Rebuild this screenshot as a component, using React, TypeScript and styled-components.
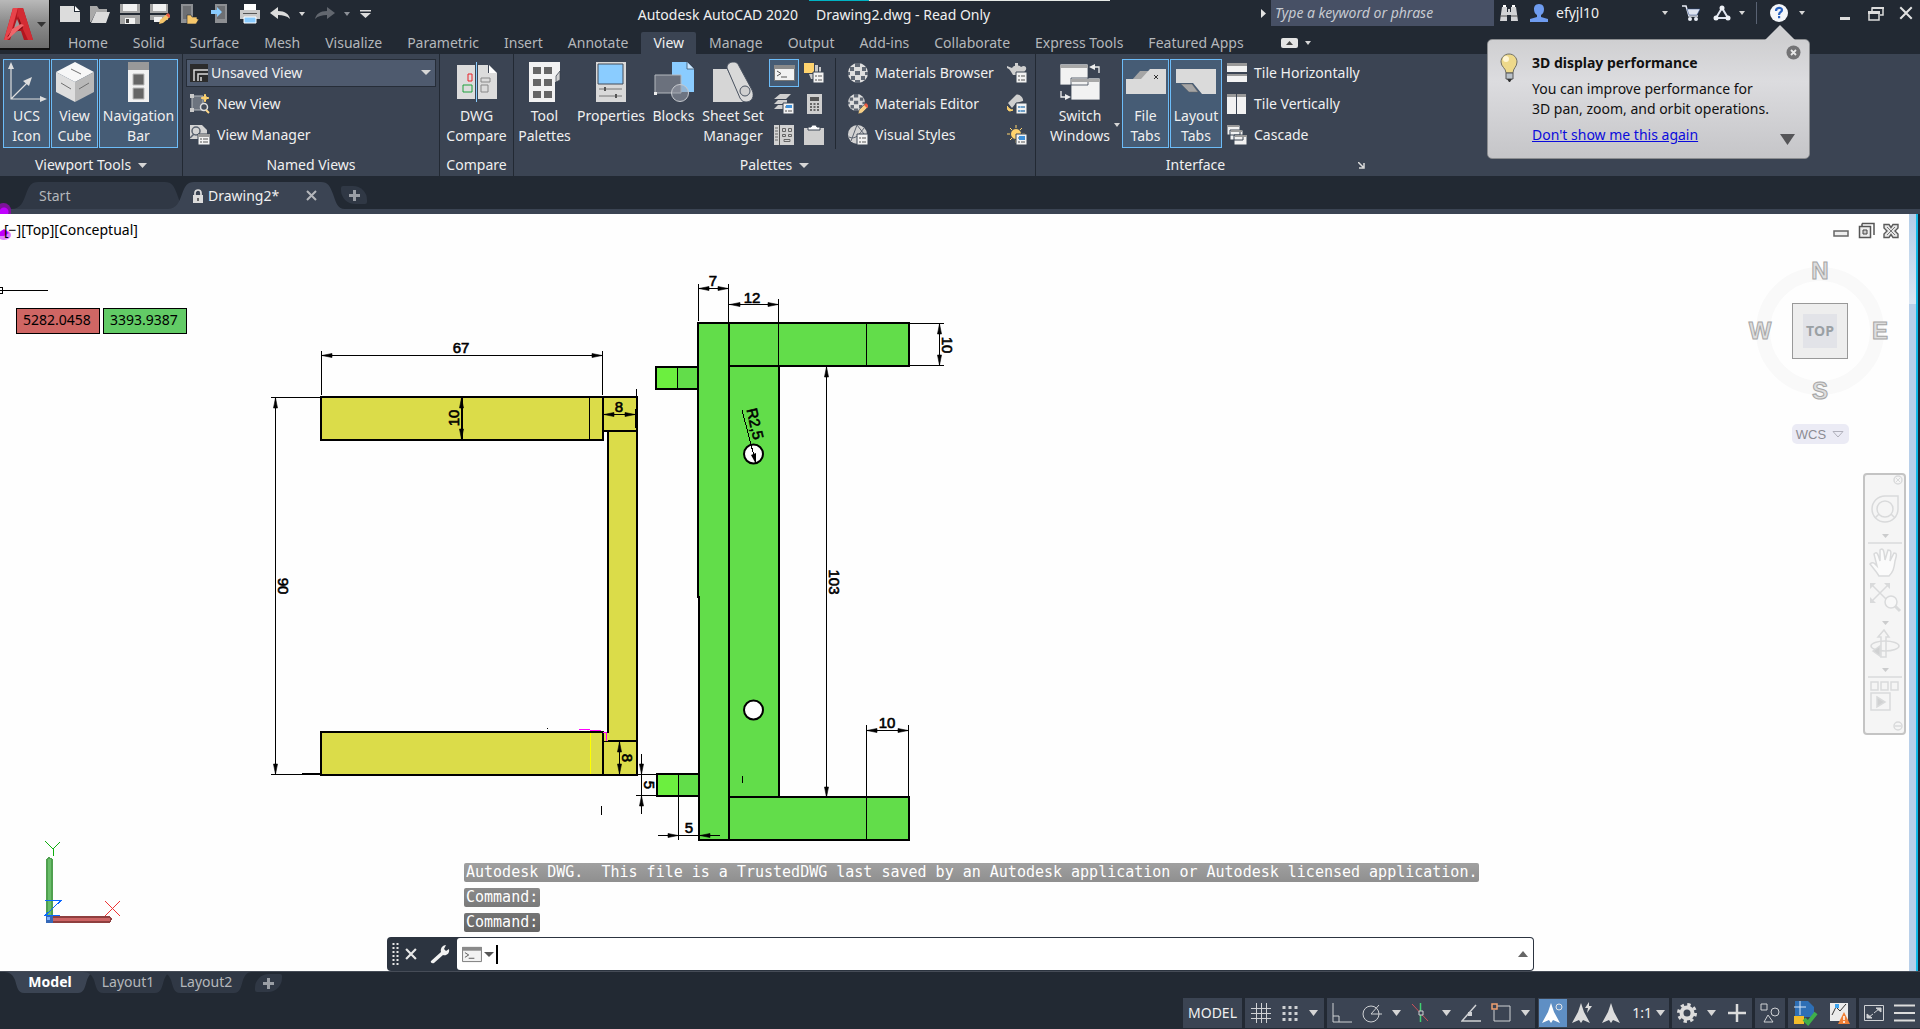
import React from 'react';
import styled, { createGlobalStyle, css } from 'styled-components';

const c = {
  frame: '#222933',
  panel: '#3b4453',
  tab: '#303845',
  text: '#f0f0f0',
  dim: '#b4b7bb',
  active: '#465c75',
  accent: '#6cbcf8',
  icon: '#dcdcdc',
  sky: '#8accff',
};

const Global = createGlobalStyle`
  *, *::before, *::after { box-sizing: border-box; }
  body { margin: 0; background: ${c.frame}; }
  button, input, select { font: inherit; color: inherit; }
  svg { display: block; flex: none; }
`;

const Window = styled.div`
  display: flex;
  flex-direction: column;
  height: 100vh;
  overflow: hidden;
  background: ${c.frame};
  color: ${c.text};
  font: 14px/20px 'Noto Sans', 'Open Sans', sans-serif;
`;

const Plain = styled.button`
  display: flex;
  align-items: center;
  justify-content: center;
  padding: 0;
  border: 0;
  background: none;
  white-space: nowrap;
`;

/* ---------- header ---------- */

const Header = styled.header`
  display: grid;
  grid-template-columns: 50px 1fr;
  height: 54px;
`;

const AppButton = styled(Plain)`
  height: 50px;
  gap: 3px;
  border-right: 1px solid #111;
  border-bottom: 2px solid #111;
  background: linear-gradient(#b9b9b9, #8d8d8d 45%, #6d6d6d);
`;

const TitleRow = styled.div`
  display: flex;
  height: 27px;
`;

const QuickBar = styled.div`
  display: flex;
  align-items: center;
  gap: 10px;
  width: 322px;
  padding-left: 10px;
`;

const Undo = styled(Plain)`
  gap: 9px;
`;

const Title = styled.h1`
  position: relative;
  display: flex;
  flex: 1;
  justify-content: center;
  gap: 18px;
  margin: 0;
  padding-top: 5px;
  font-size: 14px;
  font-weight: 400;
  white-space: nowrap;
  &::before {
    content: '';
    position: absolute;
    top: 0;
    left: 437px;
    width: 301px;
    height: 1px;
    background: linear-gradient(90deg, #00b3c4 60px, #e6e9e6 60px);
  }
`;

const InfoCenter = styled.div`
  display: flex;
  align-items: stretch;
  width: 664px;
  height: 26px;
`;

const Slot = styled(Plain)<{ $w: number; $gap?: number }>`
  width: ${p => p.$w}px;
  gap: ${p => p.$gap ?? 0}px;
`;

const Search = styled.input`
  width: 223px;
  padding: 0 4px;
  border: 0;
  border-radius: 0;
  background: #475065;
  font-style: italic;
  &::placeholder { color: #c6cad1; opacity: 1; }
`;

const User = styled(Plain)`
  width: 150px;
  gap: 8px;
  padding: 0 6px;
  span { flex: 1; text-align: left; }
`;

const Rule = styled.i`
  width: 1px;
  margin: 2px 6px;
  background: #596273;
`;

const WindowButtons = styled.div`
  display: flex;
  margin-left: auto;
`;

const RibbonTabs = styled.nav`
  display: flex;
  align-items: flex-end;
  gap: 1px;
  height: 27px;
  padding-left: 6px;
`;

const RibbonTab = styled(Plain)<{ $on?: boolean }>`
  height: 22px;
  padding: 0 12px;
  border-radius: 2px 2px 0 0;
  color: ${p => (p.$on ? c.text : c.dim)};
  background: ${p => (p.$on ? c.panel : 'none')};
`;

const Collapse = styled(Plain)`
  gap: 7px;
  height: 22px;
  margin-left: 24px;
`;

/* ---------- ribbon ---------- */

const Ribbon = styled.section`
  display: flex;
  height: 122px;
  background: ${c.panel};
`;

const Panel = styled.section<{ $w?: number; $last?: boolean }>`
  display: flex;
  flex-direction: column;
  flex: none;
  width: ${p => p.$w}px;
  border-right: ${p => (p.$last ? 0 : 1)}px solid ${c.frame};
`;

const PanelBody = styled.div`
  display: flex;
  flex: 1;
  gap: 1px;
  padding: 3px 3px 0;
`;

const PanelTitle = styled.h2`
  display: flex;
  align-items: center;
  justify-content: center;
  gap: 7px;
  height: 22px;
  margin: 0;
  padding: 0 4px;
  font-size: 14px;
  font-weight: 400;
`;

const WideTitle = styled.span`
  flex: 1;
  text-align: center;
`;

const BigButton = styled(Plain)<{ $w: number; $on?: boolean }>`
  position: relative;
  flex: none;
  flex-direction: column;
  justify-content: flex-start;
  gap: 4px;
  width: ${p => p.$w}px;
  height: 89px;
  margin-top: 2px;
  padding-top: 2px;
  border: 1px solid ${p => (p.$on ? c.accent : 'transparent')};
  background: ${p => (p.$on ? c.active : 'none')};
  line-height: 20px;
`;

const MenuMark = styled.i`
  position: absolute;
  right: 0;
  bottom: 20px;
`;

const IconBox = styled.span`
  display: grid;
  place-items: center;
  height: 40px;
`;

const List = styled.div<{ $pad?: number }>`
  display: grid;
  flex: 1;
  grid-auto-rows: 31px;
  align-content: start;
  padding-left: ${p => p.$pad ?? 0}px;
`;

const ViewList = styled(List)`
  padding: 3px 3px 0;
`;

const Row = styled(Plain)<{ $pad?: number }>`
  justify-content: flex-start;
  gap: 7px;
  padding-left: ${p => p.$pad ?? 0}px;
`;

const Combo = styled.label`
  display: flex;
  align-items: center;
  align-self: center;
  height: 28px;
  padding: 0 4px 0 3px;
  border: 1px solid #262d38;
  background: #4e5a6e;
`;

const Select = styled.select`
  flex: 1;
  height: 26px;
  padding: 0 4px 0 3px;
  border: 0;
  appearance: none;
  background: none;
`;

const ToolGrid = styled.div`
  display: grid;
  grid-template-columns: 30px 30px;
  grid-auto-rows: 31px;
  place-items: center;
`;

const ToolColumn = styled(ToolGrid)`
  grid-template-columns: 30px;
`;

const Tool = styled(Plain)<{ $on?: boolean }>`
  width: 30px;
  height: 28px;
  border: 1px solid ${p => (p.$on ? c.accent : 'transparent')};
  background: ${p => (p.$on ? c.active : 'none')};
`;

const Divider = styled.i`
  width: 1px;
  height: 91px;
  margin: 1px 5px 0;
  background: ${c.frame};
`;

/* ---------- file tabs ---------- */

const FileTabs = styled.nav`
  display: flex;
  align-items: flex-end;
  height: 38px;
  padding-left: 11px;
  border-bottom: 5px solid ${c.panel};
`;

const topTab = (w: number) =>
  `path('M0 27C10 27 12 20 15 12C18 4 20 0 27 0H${w - 24}C${w - 17} 0 ${w - 15} 4 ${w - 12} 12C${w - 9} 20 ${w - 8} 27 ${w} 27Z')`;

const FileTab = styled.div<{ $w: number; $on?: boolean }>`
  display: flex;
  align-items: center;
  gap: 5px;
  width: ${p => p.$w}px;
  height: 27px;
  padding: 0 28px;
  clip-path: ${p => topTab(p.$w)};
  background: ${p => (p.$on ? c.panel : c.tab)};
  color: ${p => (p.$on ? c.text : c.dim)};
  & + & { margin-left: -22px; padding-left: 26px; }
  button:last-child:not(:first-child) { margin-left: auto; }
`;

const AddFile = styled(Plain)`
  width: 26px;
  height: 18px;
  margin: 0 0 5px -4px;
  border-radius: 2px 14px 2px 14px;
  background: ${c.tab};
`;

/* ---------- drawing area ---------- */

const Workspace = styled.main`
  display: flex;
  flex: 1;
  min-height: 0;
`;

const Canvas = styled.section`
  position: relative;
  flex: 1;
  overflow: hidden;
  background: #fefefe;
  color: #000;
`;

const Edge = styled.i`
  width: 9px;
  border-right: 2px solid #12b9e6;
  background: linear-gradient(#b3cde8, #dbe7f4 90px, #b9d0ea 90px);
`;

const FrameEdge = styled.i`
  width: 2px;
  background: #1b2536;
`;

const Sheet = styled.svg`
  position: absolute;
  inset: 0;
  width: 100%;
  height: 100%;
  text {
    font: 400 15px 'Liberation Sans', Arial, sans-serif;
    text-anchor: middle;
    stroke: #000;
    stroke-width: 0.6;
  }
`;

const ViewLabel = styled.div`
  position: absolute;
  top: 6px;
  left: 4px;
`;

const Coordinates = styled.div`
  position: absolute;
  top: 94px;
  left: 16px;
  display: flex;
  gap: 3px;
`;

const Coordinate = styled.output<{ $bg: string }>`
  width: 84px;
  height: 26px;
  padding: 1px 6px;
  border: 1px solid #000;
  background: ${p => p.$bg};
`;

const SheetButtons = styled.div`
  position: absolute;
  top: 8px;
  right: 8px;
  display: flex;
  gap: 5px;
`;

const Compass = styled.div`
  position: absolute;
  top: 42px;
  right: 13px;
  display: flex;
  flex-direction: column;
  align-items: center;
  width: 152px;
  gap: 18px;
`;

const Wcs = styled(Plain)`
  gap: 6px;
  width: 57px;
  height: 20px;
  border-radius: 5px;
  background: #ebebf5;
  color: #8b8b93;
  font: 13px 'Liberation Sans', Arial, sans-serif;
`;

const NavBar = styled.nav`
  position: absolute;
  top: 259px;
  right: 3px;
  display: flex;
  flex-direction: column;
  align-items: center;
  width: 43px;
  height: 262px;
  border: 2px solid #c4c4c4;
  border-radius: 4px;
  background: #f5f5f5;
`;

const Console = styled.div`
  position: absolute;
  bottom: 0;
  left: 387px;
  display: flex;
  flex-direction: column;
  width: 1147px;
`;

const History = styled.div`
  display: flex;
  flex-direction: column;
  align-items: flex-start;
  gap: 6px;
  padding: 0 0 5px 77px;
`;

const Message = styled.p<{ $top: string; $end: string }>`
  margin: 0;
  height: 19px;
  padding: 0 2px;
  border-radius: 2px;
  background: linear-gradient(${p => p.$top}, ${p => p.$end});
  color: #fff;
  font: 15px/19px 'DejaVu Sans Mono', 'Liberation Mono', monospace;
  white-space: pre;
`;

const CommandLine = styled.form`
  display: flex;
  height: 34px;
  border-radius: 4px;
  background: #2c3440;
`;

const CommandTools = styled.div`
  display: flex;
  align-items: center;
  width: 70px;
  gap: 5px;
  padding-left: 5px;
`;

const CommandField = styled.div`
  display: flex;
  flex: 1;
  align-items: center;
  margin: 1px 1px 1px 0;
  padding: 0 5px;
  border-radius: 3px;
  background: #fff;
`;

const Caret = styled.i`
  width: 2px;
  height: 19px;
  margin-left: 2px;
  background: #000;
`;

const CommandInput = styled.input`
  flex: 1;
  border: 0;
  background: none;
  outline: 0;
`;

/* ---------- footer ---------- */

const Footer = styled.footer`
  height: 58px;
  border-top: 1px solid #464c57;
`;

const LayoutTabs = styled.nav`
  display: flex;
  height: 26px;
  padding-left: 4px;
`;

const bottomTab = (w: number) =>
  `path('M0 0C6 0 9 3 11 8C13 15 14 21 20 21H${w - 18}C${w - 12} 21 ${w - 11} 15 ${w - 9} 8C${w - 7} 3 ${w - 5} 0 ${w} 0Z')`;

const LayoutTab = styled(Plain)<{ $w: number; $on?: boolean }>`
  width: ${p => p.$w}px;
  height: 21px;
  margin-right: -13px;
  padding-bottom: 1px;
  clip-path: ${p => bottomTab(p.$w)};
  background: ${p => (p.$on ? c.panel : c.tab)};
  color: ${p => (p.$on ? '#fff' : c.dim)};
  font-weight: ${p => (p.$on ? 700 : 400)};
`;

const AddLayout = styled(Plain)`
  width: 27px;
  height: 18px;
  margin: 2px 0 0 16px;
  border-radius: 14px 2px 14px 2px;
  background: ${c.tab};
`;

const StatusBar = styled.div`
  display: flex;
  justify-content: flex-end;
  height: 30px;
  gap: 3px;
`;

const Group = styled.div<{ $w: number }>`
  display: flex;
  align-items: center;
  justify-content: space-around;
  width: ${p => p.$w}px;
  background: ${c.panel};
`;

const StatusButton = styled(Plain)<{ $on?: boolean }>`
  height: 28px;
  padding: 0 3px;
  gap: 4px;
  ${p => p.$on && css`background: #5f8fc4;`}
`;

/* ---------- balloon ---------- */

const Balloon = styled.aside`
  position: absolute;
  top: 39px;
  right: 110px;
  display: grid;
  grid-template-columns: 20px 1fr 16px;
  column-gap: 12px;
  width: 323px;
  height: 120px;
  padding: 13px 8px 0 12px;
  border: 1px solid #8b8d90;
  border-radius: 5px;
  background: linear-gradient(#cfcfd1, #dcdcdf 35%, #c5c5c8);
  color: #111;
  &::before {
    content: '';
    position: absolute;
    top: -15px;
    right: 14px;
    width: 30px;
    height: 15px;
    background: #cfcfd1;
    clip-path: polygon(50% 0, 100% 100%, 0 100%);
  }
  h2 { margin: 0 0 6px; font-size: 14px; line-height: 20px; }
  p { margin: 0 0 6px; white-space: nowrap; }
  a { color: #0b0bdc; }
`;

const BalloonTools = styled.div`
  display: flex;
  flex-direction: column;
  justify-content: space-between;
  align-items: flex-end;
  height: 100px;
  margin-top: -8px;
  button:last-child { padding-right: 6px; }
`;

/* ---------- icons ---------- */

type Kids = { children?: React.ReactNode };
const Ico = ({ w = 20, h = 20, box, children }: Kids & { w?: number; h?: number; box?: string }) => (
  <svg width={w} height={h} viewBox={box ?? `0 0 ${w} ${h}`} aria-hidden="true">{children}</svg>
);
const Down = ({ w = 6, h = 4, fill = '#d6d6d6' }) => (
  <Ico w={w} h={h}><path d={`M0 0H${w}L${w / 2} ${h}Z`} fill={fill} /></Ico>
);
const Plus = () => <Ico w={11} h={11}><path d="M4 0h3v4h4v3H7v4H4V7H0V4h4z" fill="#9a9ea5" /></Ico>;

const Logo = () => (
  <Ico w={30} h={35}>
    <path d="M9 1h10l10 32h-9l-3-9H9l-3 9H0z" fill="#b3161f" />
    <path d="M9 1h5L8 22 3 33H0z" fill="#e8434a" />
    <path d="M14 1h5l10 32h-5L13 9z" fill="#d32b33" />
    <path d="M14 9l5 12L3 30l6-8 7-3z" fill="#7d0d14" />
    <path d="M13 12l3 7-6 2z" fill="#9b9b9b" />
    <path d="M20 18L3 33l5-11 9-5z" fill="#f0666a" />
  </Ico>
);
const NewFile = () => <Ico><path d="M0 2h14v6h6v10H0z" fill={c.icon} /><path d="M15 2l5 5h-5z" fill="#fff" /></Ico>;
const Open = () => <Ico><path d="M0 2h7l2 3h8v3H6L1 18H0z" fill="#a9a9a9" /><path d="M6 8h14l-4 11H1z" fill={c.icon} /></Ico>;
const Save = () => <Ico><path d="M0 0h20v20H0z" fill="#a5a5a5" /><path d="M3 0h14v7H3z" fill="#f2f2f2" /><path d="M0 9h20v2H0z" fill={c.frame} /><path d="M5 14h10v6H5z" fill="#f2f2f2" /><path d="M6 15h3v4H6z" fill="#444" /></Ico>;
const SaveAs = () => <Ico><path d="M0 0h18v16H0z" fill="#a5a5a5" /><path d="M3 0h13v7H3z" fill="#f2f2f2" /><path d="M0 9h18v2H0z" fill={c.frame} /><path d="M4 13h8v5H4z" fill="#f2f2f2" /><path d="M9 20l1-4 7-6 3 3-7 6z" fill="#f5c56b" /><path d="M16 11l2-2 3 3-2 2z" fill="#ea5b43" /></Ico>;
const OpenMobile = () => <Ico><path d="M1 0h12v19H1z" fill="#8d8f93" /><path d="M3 2h8v13H3z" fill="#6d6f73" /><path d="M7 11h4l1 2h5v2h2l-3 5H7z" fill="#f7c76b" stroke={c.frame} strokeWidth=".6" /></Ico>;
const SaveMobile = () => <Ico><path d="M5 0h12v19H5z" fill="#8d8f93" /><path d="M7 2h8v13H7z" fill="#6d6f73" /><path d="M1 6h6V3l5 5-5 5V10H1z" fill={c.sky} /></Ico>;
const Print = () => <Ico><path d="M4 0h12v6H4z" fill="#fff" /><path d="M0 6h20v9H0z" fill="#c9c9c9" /><path d="M3 9h14v1H3z" fill="#555" /><path d="M4 13h12v6H4z" fill={c.sky} stroke="#fff" /></Ico>;
const UndoIco = ({ flip = false, fill = '#dcdcdc' }) => (
  <Ico w={20} h={14}><path transform={flip ? 'translate(20 0) scale(-1 1)' : undefined} d="M0 6l8-6v4c7 0 11 3 12 8-3-3-7-4-12-4v4z" fill={fill} /></Ico>
);
const Customize = () => <Ico w={11} h={10}><path d="M0 1h11v1.500H0zM0 4h11L5.500 9z" fill="#dcdcdc" /></Ico>;
const Binoculars = () => <Ico w={18} h={18}><path d="M2 3h5v5H8V5h2v3h1V3h5l2 14h-7v-6H7v6H0z" fill="#d2d3d5" /><path d="M0 12h7M11 12h7" stroke="#555" /><path d="M3 1h3v2H3zM12 1h3v2h-3z" fill="#fff" /></Ico>;
const UserIco = () => <Ico w={18} h={18}><path d="M9 0c4 0 5 3 5 5 0 3-1 5-3 6v2l7 2v3H0v-3l7-2v-2C5 10 4 8 4 5c0-2 1-5 5-5z" fill="#6f9cf0" /></Ico>;
const Cart = () => <Ico w={18} h={17}><path d="M0 1h4l3 10h9" fill="none" stroke="#e8ecf5" strokeWidth="1.500" /><path d="M5 4h13l-3 6H7z" fill="#dfe4ef" stroke="#32508f" strokeWidth=".5" /><circle cx="8" cy="14" r="2" fill="#e8ecf5" /><circle cx="14" cy="14" r="2" fill="#e8ecf5" /></Ico>;
const AppStore = () => <Ico w={18} h={17}><path d="M9 3L3 13h12z" fill="none" stroke="#dfe4ef" strokeWidth="2" /><circle cx="9" cy="3" r="2.500" fill="#eef1f7" /><circle cx="3" cy="13" r="2.500" fill="#eef1f7" /><circle cx="15" cy="13" r="2.500" fill="#eef1f7" /></Ico>;
const Help = () => <Ico w={18} h={18}><circle cx="9" cy="9" r="9" fill="#f4f6fa" /><path d="M6 7c0-4 6-4 6-1 0 2-3 2-3 5" fill="none" stroke="#2a63c0" strokeWidth="2.200" /><path d="M8 12h2.200v2.200H8z" fill="#2a63c0" /></Ico>;
const CollapseIco = () => <Ico w={17} h={10}><rect width="17" height="10" rx="2" fill="#e4e4e4" /><path d="M5 7l3.500-4L12 7z" fill="#444" /></Ico>;

const Ucs = () => <Ico w={40} h={40}><path d="M4 4v33h33M4 37l18-18" fill="none" stroke="#dedede" strokeWidth="1.200" /><path d="M1 7l3-7 3 7zM33 34l7 3-7 3zM16 19l9-4-3 9z" fill="#dedede" /></Ico>;
const Cube = () => <Ico w={38} h={40}><path d="M19 0l19 10-19 10L0 10z" fill="#f7f7f7" /><path d="M0 10l19 10v20L0 30z" fill="#dedede" /><path d="M38 10L19 20v20l19-10z" fill="#b9b9b9" /><path d="M15 7l10 5M5 21l10 6M23 27l10-6" stroke="#6f6f6f" /></Ico>;
const NavIco = () => <Ico w={21} h={40}><path d="M0 0h21v40H0z" fill="#f2f2f2" /><path d="M0 0h21v8H0z" fill="#999" /><path d="M5 12h11v11H5zM5 26h11v11H5z" fill="#666" stroke="#bbb" /></Ico>;
const ViewIco = () => <Ico w={18} h={18}><path d="M0 0h18v18H0z" fill="#2c2c2c" /><path d="M4 17V6h14M8 17v-7h10M11 17v-4" fill="none" stroke="#d9d9d9" strokeWidth="1.500" /></Ico>;
const NewView = () => <Ico><path d="M2 2h11v14H2z" fill="#6d747f" stroke="#b8bbc0" /><path d="M0 0h4v4H0zM0 14h4v4H0z" fill="#c9c9c9" /><path d="M15 0l1 3 3 1-3 1-1 3-1-3-3-1 3-1z" fill="#ffd36e" stroke="#ffd36e" /><circle cx="14" cy="13" r="3.500" fill="#444c59" stroke="#e0e0e0" strokeWidth="1.500" /><path d="M16 16l3 3" stroke="#ffd98a" strokeWidth="2" /></Ico>;
const ViewManager = () => <Ico><path d="M0 0h12l5 5v9H0z" fill="#d4d4d4" /><circle cx="6" cy="6" r="4" fill="none" stroke="#5a626f" strokeWidth="1.500" /><path d="M9 9l3 3M0 13l4-4" stroke="#5a626f" strokeWidth="1.500" /><path d="M8 9h12v11H8z" fill="#f4f4f4" stroke={c.panel} /><path d="M8 9h12v3H8z" fill="#9b9b9b" /><path d="M10 14h2m1 0h5m-8 3h2m1 0h5" stroke="#555" /></Ico>;
const Compare = () => <Ico w={40} h={40}><path d="M0 3h18v34H0zM21 3h10v8h9v26H21z" fill={c.icon} /><path d="M32 3l8 8h-8z" fill="#fff" /><path d="M19.500 0v40" stroke={c.sky} /><path d="M11 12h4v7h-4z" fill="none" stroke="#e8232b" /><path d="M6 23h9v7H6z" fill="none" stroke="#1fa03c" /><path d="M24 16h9v4h-9zM24 23h7v7h-7z" fill="none" stroke="#888" /></Ico>;
const ToolPalettes = () => <Ico w={32} h={40}><path d="M0 0h31v10l-4 4v6h-1v20H0z" fill="#f2f2f2" /><path d="M27 20v-6l4-5v9z" fill="#d0d0d0" stroke="#333c49" strokeWidth=".7" /><path d="M4 5h8v7H4zM15 5h8v7h-8zM4 17h8v7H4zM15 17h8v7h-8zM4 29h8v7H4zM15 29h8v7h-8z" fill="#666" /></Ico>;
const PropertiesIco = () => <Ico w={30} h={40}><path d="M0 0h30v40H0z" fill="#d9d9d9" /><path d="M2 2h25v20H2z" fill={c.sky} stroke="#444c59" /><path d="M3 27h23M3 34h23" stroke="#777" /><path d="M8 25h2v4H8zM19 32h2v4h-2z" fill="#555" /></Ico>;
const Blocks = () => <Ico w={40} h={40}><path d="M18 0h15l7 7v23H18z" fill={c.sky} /><path d="M33 0v7h7" fill="#cfe9ff" stroke="#39506a" strokeWidth=".8" /><path d="M1 13h26v18H1z" fill="#6b717d" stroke="#b4b8be" /><circle cx="26" cy="31" r="8.500" fill="#9aa0ab88" stroke="#c6c9ce" /><path d="M0 30h3v3H0z" fill="#eee" /></Ico>;
const SheetSet = () => <Ico w={40} h={40}><path d="M0 7h14l16 33H0z" fill="#d6d6d6" /><path d="M14 6c0-4 3-6 6-6 4 0 5 2 6 4l13 24c3 6 0 12-6 12-3 0-5-2-6-4z" fill="#d9d9d9" stroke="#4a5361" /><circle cx="32" cy="29" r="5" fill="#d0d0d0" stroke="#4a5361" /></Ico>;
const Terminal = ({ w = 21, h = 18 }) => <Ico w={w} h={h} box="0 0 21 18"><path d="M.5 1.500h20v15H.5z" fill="#f2f2f2" stroke="#777" /><path d="M0 1h21v4H0z" fill="#8a8a8a" /><path d="M3 7l4 2.500L3 12M7 13h6" fill="none" stroke="#555" /></Ico>;
const Mini = () => <><path d="M9 9h11v11H9z" fill="#f2f2f2" stroke={c.panel} /><path d="M11 13h2m1 0h4m-7 4h2m1 0h4" stroke="#555" /></>;
const DesignCenter = () => <Ico><path d="M0 0h10v10H0z" fill="#ffd36e" /><path d="M11 2h3v7h-3zM15 4h2v5h-2zM5 11h4v5H7z" fill="#c9c9c9" /><Mini /></Ico>;
const Layers = () => <Ico><path d="M6 0h11l-5 5H0zM4 6h9v4H0zM4 11h5v4H0z" fill="#cfcfcf" /><Mini /><path d="M12 11h6v3h-6z" fill="#3d8fd8" /></Ico>;
const Calc = () => <Ico w={15} h={20}><path d="M0 0h15v20H0z" fill="#cfcfcf" /><path d="M3 3h9v4H3z" fill="#555" /><path d="M3 9h2v2H3zm3.500 0h2v2h-2zM10 9h2v2h-2zM3 12h2v2H3zm3.500 0h2v2h-2zM10 12h2v2h-2zM3 15h2v2H3zm3.500 0h2v2h-2zM10 15h2v2h-2z" fill="#666" /></Ico>;
const Markup = () => <Ico><path d="M0 0h20v20H0z" fill="#d2d2d2" /><path d="M5.500 0v20" stroke="#555" /><path d="M1 3h3M1 6h3M1 9h3M1 12h3M1 15h3" stroke="#666" /><path d="M8.500 3.500h3v3h-3zM14.500 3.500h3v3h-3zM8.500 9.500h3v2h-3zM14.500 9.500h3v2h-3zM10 14.500h6v2h-6z" fill="none" stroke="#666" /></Ico>;
const Clipboard = () => <Ico><path d="M0 3h20v17H0z" fill="#cfcfcf" /><path d="M4 5V2h3l1-2h4l1 2h3v3z" fill="#fff" stroke={c.panel} /></Ico>;
const Ball = () => (
  <><circle cx="10" cy="10" r="10" fill="#dedede" /><path d="M7 0h5v4H7zM2 4h4v4H2zM14 4h4v4h-4zM7 8h5v4H7zM0 9h2v3H0zM17 9h3v3h-3zM3 13h4v4H3zM13 13h4v4h-4zM7 17h5v3H7z" fill="#5f6773" /></>
);
const Materials = () => <Ico><Ball /></Ico>;
const MaterialsEdit = () => <Ico><g transform="scale(.85)"><Ball /></g><path d="M10 20l1-4 6-6 3 3-6 6z" fill="#f7cf86" stroke={c.panel} strokeWidth=".6" /><path d="M16 11l2-2 3 3-2 2z" fill="#ea5b43" /></Ico>;
const Styles = () => <Ico><circle cx="9.500" cy="9.500" r="9.500" fill="#d2d2d2" /><path d="M9 0L3 16M9 0l7 9M1 12c6 3 10-2 15-9" fill="none" stroke="#5a626f" /><Mini /></Ico>;
const Teapot = () => <Ico><path d="M0 3l5 2c2-3 7-3 9-1 4-3 7 1 4 4l-3 4H6C4 9 3 6 0 5z" fill="#cfcfcf" /><path d="M8 0h3v3H8z" fill="#cfcfcf" /><Mini /></Ico>;
const Lights = () => <Ico><path d="M9 1c3-2 8 3 7 6l-7 2-4 5-4-5z" fill="#cfcfcf" /><path d="M0 12c2 3 4 4 6 4l-3 1c-2 0-3-2-3-5z" fill="#ffd36e" stroke="#ffd36e" /><Mini /><path d="M11 13h7m-7 4h7" stroke="#3d9be8" /></Ico>;
const Sun = () => <Ico><path d="M9 0v18M0 9h18M3 3l12 12M15 3L3 15" stroke="#ffd36e" /><circle cx="9" cy="9" r="5.500" fill="#ffd36e" stroke={c.panel} /><Mini /><path d="M12 11h6v4h-6z" fill="#3d8fd8" /></Ico>;
const SwitchIco = () => <Ico w={40} h={36}><path d="M0 0h28v21H0zM11 14h29v22H11z" fill="#f2f2f2" stroke={c.panel} strokeWidth=".8" /><path d="M0 1h28v3H0zM11 15h29v3H11z" fill="#a8a8a8" /><path d="M39 9V3h-6M1 27v6h5" fill="none" stroke="#eee" strokeWidth="1.300" /><path d="M29 3l6-3v6zM11 33l-6-3v6z" fill="#eee" /></Ico>;
const FileTabIco = () => <Ico w={40} h={40}><path d="M6 18l8-9h9l-6 9z" fill="#a5a5a5" /><path d="M0 17h15l9-10h16v25H0z" fill="#dadada" /><path d="M28 13l4 4m0-4l-4 4" stroke="#333" /></Ico>;
const LayoutTabIco = () => <Ico w={40} h={40}><path d="M5 22h11l6 8h-9z" fill="#a5a5a5" stroke="#666" strokeWidth=".5" /><path d="M0 7h40v25H26l-9-11H0z" fill="#dadada" /></Ico>;
const TileH = () => <Ico><path d="M0 0h20v9H0zM0 11h20v8H0z" fill="#f2f2f2" /><path d="M0 0h20v3H0zM0 11h20v2H0z" fill="#999" /></Ico>;
const TileV = () => <Ico><path d="M0 0h9v20H0zM10 0h9v20h-9z" fill="#f2f2f2" /><path d="M0 0h9v3H0zM10 0h9v3h-9z" fill="#999" /></Ico>;
const CascadeIco = () => <Ico><g stroke={c.panel} fill="#f2f2f2"><path d="M0 0h13v10H0zM3 5h13v10H3zM7 10h13v10H7z" /></g><path d="M0 0h12v2H0zM4 5h11v2H4zM8 10h12v2H8z" fill="#999" /></Ico>;
const Launcher = () => <Ico w={7} h={7}><path d="M0 0l5 5M6 1v5H1" fill="none" stroke="#dcdcdc" strokeWidth="1.500" /></Ico>;
const Lock = () => <Ico w={10} h={14}><path d="M2 6V4c0-4 6-4 6 0v2" fill="none" stroke="#dcdcdc" strokeWidth="1.700" /><path d="M0 6h10v8H0z" fill="#dcdcdc" /><path d="M4 9h2v3H4z" fill="#666" /></Ico>;
const Cross = ({ s = 11, color = '#b4b7bb', sw = 2 }) => <Ico w={s} h={s} box="0 0 11 11"><path d="M1 1l9 9M10 1l-9 9" stroke={color} strokeWidth={sw} /></Ico>;
const Wrench = () => <Ico w={20} h={20}><path d="M1 17L11 8c-1-4 2-7 5-7l-2 4 2 2 3-2c1 5-3 7-6 6L4 19c-2 1-4-1-3-2z" fill="#f2f2f2" /></Ico>;
const Grip = () => <Ico w={7} h={22}><path d="M1.500 0v22M5.500 0v22" stroke="#e8e8e8" strokeWidth="2" strokeDasharray="2 2" /></Ico>;

/* ---------- drawing ---------- */

const heads = { l: 'M0 0l10-2v4z', r: 'M0 0l-10-2v4z', u: 'M0 0l-2 10h4z', d: 'M0 0l-2-10h4z' };
const Head = ({ x, y, to }: { x: number; y: number; to: keyof typeof heads }) => (
  <path d={heads[to]} transform={`translate(${x} ${y})`} fill="#000" stroke="#000" />
);
const Note = ({ x, y, r = 0, children }: Kids & { x: number; y: number; r?: number }) => (
  <text transform={`translate(${x} ${y}) rotate(${r})`}>{children}</text>
);

const Drawing = () => (
  <Sheet aria-label="Drawing">
    <g transform="translate(0 -214)">
      <g shapeRendering="crispEdges" stroke="#000">
        <g fill="#dbdc49" strokeWidth="2">
          <path d="M608 431h29v311h-29z" />
          <path d="M321 397h282v43H321zM603 397h34v34h-34zM321 732h282v43H321z" />
          <path d="M603 741h34v34h-34z" />
        </g>
        <path d="M604 733h5v8h-5z" fill="#dbdc49" stroke="none" />
        <g fill="#62dd4a" strokeWidth="2">
          <path d="M698 367h-42v22h42zM699 774h-42v22h42z" />
          <path d="M698 323h31v517h-30V597h-1zM729 323h180v43H729zM729 366h50v431h-50zM729 797h180v43H729z" />
        </g>
        <path d="M657 368h20v20h-20zM658 775h20v20h-20z" fill="#6cef3f" stroke="none" />
        <g fill="#fefefe" strokeWidth="2" shapeRendering="auto">
          <circle cx="753.500" cy="454" r="9.500" /><circle cx="753.500" cy="710" r="9.500" />
        </g>
        <g fill="none" strokeWidth="1">
          <path d="M589.500 397v43M677.500 368v21M678.500 774v66M866.500 323v43M866.500 725v115M778.500 299v67" />
          <path d="M321.500 351v44M602.500 351v44M321 355.500h282" />
          <path d="M271 397.500h50M271 774.500h50M275.500 397v378M302 773.500h19" />
          <path d="M603 414.500h33M636.500 389v8M619.500 741v34" />
          <path d="M641.500 754v60M637 774.500h20M636 795.500h21" />
          <path d="M698.500 284v37M728.500 284v51M698 288.500h31M729 304.500h50" />
          <path d="M909 323.500h35M909 365.500h35M939.500 323v43M826.500 366v431" />
          <path d="M866 730.500h43M908.500 725v72M658 835.500h62" />
          <path d="M742.500 776v7M601.500 806v9M547 728.500h1M742 410l13 50M0 290.500h48M-1 287.500h3v6h-3z" />
        </g>
        <path d="M461.500 397v43M636 409v19M608 741h23" strokeWidth="2" />
        <path d="M590.500 733v41" stroke="#ff0" />
        <path d="M579 729.500h11M590 730.500h11M603 732.500h4M606.500 733v8" stroke="#f0f" />
      </g>
      <g strokeWidth=".6">
        <Head x={322} y={355.5} to="l" /><Head x={602} y={355.5} to="r" />
        <Head x={275.5} y={398} to="u" /><Head x={275.5} y={774} to="d" />
        <Head x={461.5} y={398} to="u" /><Head x={461.5} y={439} to="d" />
        <Head x={604} y={414.5} to="l" /><Head x={635} y={414.5} to="r" />
        <Head x={619.5} y={742} to="u" /><Head x={619.5} y={774} to="d" />
        <Head x={641.5} y={774} to="d" /><Head x={641.5} y={796} to="u" />
        <Head x={699} y={288.5} to="l" /><Head x={728} y={288.5} to="r" />
        <Head x={730} y={304.5} to="l" /><Head x={778} y={304.5} to="r" />
        <Head x={939.5} y={324} to="u" /><Head x={939.5} y={365} to="d" />
        <Head x={826.5} y={367} to="u" /><Head x={826.5} y={797} to="d" />
        <Head x={867} y={730.5} to="l" /><Head x={908} y={730.5} to="r" />
        <Head x={678} y={835.5} to="r" /><Head x={700} y={835.5} to="l" />
        <path d="M756 464l-5-9 5-2z" />
      </g>
      <Note x={461} y={353}>67</Note><Note x={278} y={586} r={90}>90</Note>
      <Note x={459} y={418} r={-90}>10</Note><Note x={619} y={412}>8</Note>
      <Note x={622} y={758} r={90}>8</Note><Note x={644} y={785} r={90}>5</Note>
      <Note x={713} y={286}>7</Note><Note x={752} y={303}>12</Note>
      <Note x={942} y={345} r={90}>10</Note><Note x={829} y={582} r={90}>103</Note>
      <Note x={887} y={728}>10</Note><Note x={689} y={833}>5</Note>
      <Note x={750} y={425} r={77}>R2,5</Note>
      <g fill="#c000ff"><ellipse cx="4" cy="235" rx="7" ry="5" opacity=".5" /><path d="M0 232l4-3 5 4-5 3H0z" /></g>
      <g shapeRendering="crispEdges" fill="none">
        <path d="M46 859l3-2 4 2v57h-7z" fill="#4fa04f" /><path d="M48 859h3v57h-3z" fill="#69bd69" />
        <path d="M53 916h57l2 3-2 4H53z" fill="#8f3f3f" /><path d="M53 918h57v3H53z" fill="#cc6464" />
        <path d="M46 916h7v7h-7z" fill="#3468b8" /><path d="M47 917h3v3h-3z" fill="#7fb2ff" />
        <path d="M45 841l8 8 7-7M53.500 849v7" stroke="#0fae0f" />
        <path d="M45 900.500h16L45 915.500h15" stroke="#0a66ff" />
        <path d="M105 901l15 15M120 901l-15 15" stroke="#e33" />
      </g>
    </g>
  </Sheet>
);

/* grip marker that straddles the tab strip at the left edge */
const GripMark = styled.i`
  position: absolute;
  top: 203px;
  left: -4px;
  width: 15px;
  height: 11px;
  border-radius: 8px 8px 0 0;
  background: radial-gradient(circle at 8px 9px, #c000ff 4px, #7d129b 5px);
`;

const CompassArt = styled.svg`
  text { text-anchor: middle; font: 700 24px 'Liberation Sans', Arial, sans-serif; fill: #dedede; stroke: #a5a5a5; stroke-width: 1; }
  .face { font: 700 14px 'Open Sans', sans-serif; fill: #9aa0a4; stroke: none; }
`;

const CompassDial = () => (
  <CompassArt width="152" height="150" aria-label="View cube">
    <circle cx="76" cy="75" r="57" fill="none" stroke="#f9f9f9" strokeWidth="14" />
    <rect x="48.500" y="47.500" width="55" height="55" fill="#eeeeee" stroke="#999" />
    <rect x="59" y="58" width="34" height="34" fill="#e2e3e8" />
    <text className="face" x="76" y="80">TOP</text>
    <text x="76" y="23">N</text><text x="76" y="143">S</text>
    <text x="16" y="83">W</text><text x="136" y="83">E</text>
  </CompassArt>
);

const NavTools = () => (
  <Ico w={39} h={258}>
    <g fill="none" stroke="#d9dadb" strokeWidth="1.500" transform="translate(0 -3)">
      <circle cx="33" cy="8" r="4" /><path d="M31 6l4 4m0-4l-4 4" strokeWidth="1" />
      <path d="M20 24h13v13a13 13 0 1 1-13-13z" /><circle cx="20" cy="37" r="8" /><path d="M14 42l-4 4M26 42l4 4" />
      <path d="M3 71h34M3 205h34" />
      <path d="M14 104c-3-5-6-8-9-12 3-3 5 0 7 2L9 82c3-3 4 0 6 7V78c3-3 4 0 5 10l3-10c4 0 3 3 2 11l4-8c4 0 2 4 1 8-1 8-2 11-6 15z" fill="#fbfbfb" />
      <path d="M6 112l18 18M24 112L6 130" /><path d="M5 111h6l-6 6zM25 111h-6l6 6zM5 131v-6l6 6z" fill="#d9dadb" stroke="none" />
      <circle cx="26" cy="130" r="6" fill="#f8f8f8" /><path d="M30 134l5 5" strokeWidth="3" />
      <path d="M19 158l5 7h-3v20h-5v-20h-3z" /><ellipse cx="20" cy="174" rx="14" ry="5" />
      <path d="M8 179l7-5v10z" fill="#d0d1d2" />
      <path d="M6 210h7v8H6zM16 210h7v8h-7zM26 210h7v8h-7zM6 221h19v17H6z" />
      <path d="M12 225l8 5-8 5z" fill="#d0d1d2" /><circle cx="33" cy="254" r="4" /><path d="M30 254h6" />
      <path d="M17 62h7l-3.500 4zM17 149h7l-3.500 4zM17 196h7l-3.500 4z" fill="#cbcccd" stroke="none" />
    </g>
  </Ico>
);

const Bulb = () => (
  <Ico w={20} h={30}>
    <path d="M9 1c5 0 8 4 8 8 0 5-4 6-4 11H6C6 15 1 14 1 9c0-4 3-8 8-8z" fill="#eed98b" stroke="#6f6f66" />
    <circle cx="6" cy="6" r="3" fill="#fff6d5" /><path d="M6 20h7v6H6z" fill="#b9c1c9" stroke="#555" /><path d="M7 26h5l-2 3H9z" fill="#333" />
  </Ico>
);

/* ---------- status icons ---------- */

const g = '#cfd1d4';
const StatusGrid = () => <Ico><path d="M5.500 0v20M10.500 0v20M15.500 0v20M0 5.500h20M0 10.500h20M0 15.500h20" stroke={g} /></Ico>;
const Snap = () => <Ico w={16} h={17}><path d="M2 1v15M8 1v15M14 1v15" stroke={g} strokeWidth="3" strokeDasharray="3 3" /></Ico>;
const Ortho = () => <Ico><path d="M1 0v19h19M1 13h6v6" fill="none" stroke={g} /></Ico>;
const Polar = () => <Ico><circle cx="9" cy="11" r="8" fill="none" stroke={g} /><path d="M20 11H9l8-9" fill="none" stroke={g} /></Ico>;
const Iso = () => <Ico><path d="M9.500 0v19" stroke="#40d070" strokeWidth="1.500" /><path d="M1 1l16 17" stroke="#d0525a" /><path d="M8 8h4v4H8z" fill={c.panel} stroke={g} /></Ico>;
const Track = () => <Ico><path d="M15 2L1 18h19" fill="none" stroke={g} strokeWidth="1.500" /><path d="M7 9h4v4H7z" fill={g} /></Ico>;
const Osnap = () => <Ico><path d="M6 3h13v15H3V7" fill="none" stroke={g} /><path d="M1 1h5v5H1z" fill="none" stroke="#f0a070" strokeWidth="1.500" /></Ico>;
const Person = ({ kind = 0 }) => (
  <Ico w={22} h={22}>
    <path d="M9 1l3 9 6 11-7-3-2 3-2-3-7 3 6-11z" fill={kind === 1 ? '#fff' : '#dcdcdc'} />
    {kind === 1 && <circle cx="17" cy="5" r="3" fill="none" stroke="#e6e6e6" />}
    {kind === 2 && <path d="M17 0l-4 6h3l-1 5 5-7h-3z" fill="#dcdcdc" />}
  </Ico>
);
const Gear = () => (
  <Ico w={20} h={20}>
    <circle cx="10" cy="10" r="5.500" fill="none" stroke="#dcdcdc" strokeWidth="4" />
    <circle cx="10" cy="10" r="8.500" fill="none" stroke="#dcdcdc" strokeWidth="3" strokeDasharray="3.340 3.340" />
  </Ico>
);
const BigPlus = () => <Ico><path d="M10 1v18M1 10h18" stroke="#dcdcdc" strokeWidth="2.500" /></Ico>;
const Isolate = () => <Ico><path d="M1 1h6v6H1zM4 19l4-7 5 7z" fill="none" stroke={g} /><circle cx="15" cy="9" r="4" fill="none" stroke={g} /></Ico>;
const Hardware = () => <Ico w={26} h={26}><path d="M2 1h13l6 6v10H2z" fill="#2e6fb5" /><path d="M7 1v14M1 7h12" stroke="#d7e7f7" /><path d="M1 16h10v8H1z" fill="#f3bd2b" /><path d="M11 19l4 4 8-10" fill="none" stroke="#3faf4a" strokeWidth="4" /></Ico>;
const Warn = () => <Ico w={24} h={24}><path d="M2 2h18v18H2z" fill="#ececec" /><path d="M4 14l4-8 4 4 6-7" fill="none" stroke="#333" /><path d="M7 3h4v4H7z" fill="#3da4ef" /><path d="M16 11l6 12H10z" fill="#ef7f35" /><path d="M16 15v4m0 1v2" stroke="#fff" strokeWidth="1.500" /></Ico>;
const Clean = () => <Ico w={20} h={16}><path d="M.5.5h19v15H.5z" fill="none" stroke={g} /><path d="M12 3h5v4zM3 13V9l5 4zM10 8l5-4M5 12l4-3" fill={g} stroke={g} /></Ico>;
const Menu = () => <Ico w={21} h={18}><path d="M0 1.500h21M0 9h21M0 16.500h21" stroke="#dcdcdc" strokeWidth="2.200" /></Ico>;
const StatusDown = () => <Down w={9} h={6} />;

const ribbonTabs = ['Home', 'Solid', 'Surface', 'Mesh', 'Visualize', 'Parametric', 'Insert', 'Annotate', 'View', 'Manage', 'Output', 'Add-ins', 'Collaborate', 'Express Tools', 'Featured Apps'];

type BigProps = { w: number; on?: boolean; menu?: boolean; icon: React.ReactNode; a: string; b?: string };
const Big = ({ w, on, menu, icon, a, b }: BigProps) => (
  <BigButton type="button" $w={w} $on={on}>
    <IconBox>{icon}</IconBox>
    <span>{a}{b && <><br />{b}</>}</span>
    {menu && <MenuMark><Down /></MenuMark>}
  </BigButton>
);

export default function App() {
  return (
    <Window>
      <Global />
      <Header>
        <AppButton aria-label="Application menu"><Logo /><Down w={9} h={5} fill="#333" /></AppButton>
        <div>
          <TitleRow>
            <QuickBar>
              <Plain aria-label="New"><NewFile /></Plain>
              <Plain aria-label="Open"><Open /></Plain>
              <Plain aria-label="Save"><Save /></Plain>
              <Plain aria-label="Save as"><SaveAs /></Plain>
              <Plain aria-label="Open from mobile"><OpenMobile /></Plain>
              <Plain aria-label="Save to mobile"><SaveMobile /></Plain>
              <Plain aria-label="Plot"><Print /></Plain>
              <Undo aria-label="Undo"><UndoIco /><Down /></Undo>
              <Undo aria-label="Redo"><UndoIco flip fill="#62676f" /><Down fill="#8d9198" /></Undo>
              <Plain aria-label="Customize"><Customize /></Plain>
            </QuickBar>
            <Title><span>Autodesk AutoCAD 2020</span><span>Drawing2.dwg - Read Only</span></Title>
            <InfoCenter>
              <Slot $w={15} aria-label="Collapse search"><Ico w={5} h={9}><path d="M0 0l5 4.500L0 9z" fill="#e2e2e2" /></Ico></Slot>
              <Search aria-label="Search" placeholder="Type a keyword or phrase" />
              <Slot $w={30} aria-label="Find"><Binoculars /></Slot>
              <User><UserIco /><span>efyjl10</span><Down /></User>
              <Slot $w={34} aria-label="Cart"><Cart /></Slot>
              <Slot $w={42} $gap={8} aria-label="Apps"><AppStore /><Down /></Slot>
              <Rule />
              <Slot $w={48} $gap={11} aria-label="Help"><Help /><Down /></Slot>
              <WindowButtons>
                <Slot $w={32} aria-label="Minimize"><Ico w={10} h={14}><path d="M0 11h10v3H0z" fill="#dcdcdc" /></Ico></Slot>
                <Slot $w={30} aria-label="Restore"><Ico w={16} h={15}><path d="M4 5V2h11v7h-3" fill="none" stroke="#dcdcdc" strokeWidth="1.500" /><path d="M4 1h12v2H4z" fill="#dcdcdc" /><path d="M1 6h10v8H1z" fill="none" stroke="#dcdcdc" strokeWidth="1.500" /><path d="M0 5h12v3H0z" fill="#dcdcdc" /></Ico></Slot>
                <Slot $w={29} aria-label="Close"><Cross s={14} color="#e2e2e2" sw={1.6} /></Slot>
              </WindowButtons>
            </InfoCenter>
          </TitleRow>
          <RibbonTabs>
            {ribbonTabs.map(t => <RibbonTab key={t} $on={t === 'View'}>{t}</RibbonTab>)}
            <Collapse aria-label="Minimize ribbon"><CollapseIco /><Down /></Collapse>
          </RibbonTabs>
        </div>
      </Header>

      <Ribbon>
        <Panel $w={183}>
          <PanelBody>
            <Big w={47} on icon={<Ucs />} a="UCS" b="Icon" />
            <Big w={47} on icon={<Cube />} a="View" b="Cube" />
            <Big w={79} on icon={<NavIco />} a="Navigation" b="Bar" />
          </PanelBody>
          <PanelTitle>Viewport Tools <Down w={9} h={5} /></PanelTitle>
        </Panel>
        <Panel $w={257}>
          <ViewList>
            <Combo>
              <ViewIco />
              <Select aria-label="View"><option>Unsaved View</option></Select>
              <Down w={10} h={5} />
            </Combo>
            <Row $pad={4}><NewView />New View</Row>
            <Row $pad={4}><ViewManager />View Manager</Row>
          </ViewList>
          <PanelTitle>Named Views</PanelTitle>
        </Panel>
        <Panel $w={74}>
          <PanelBody><Big w={67} icon={<Compare />} a="DWG" b="Compare" /></PanelBody>
          <PanelTitle>Compare</PanelTitle>
        </Panel>
        <Panel $w={522}>
          <PanelBody>
            <Big w={55} icon={<ToolPalettes />} a="Tool" b="Palettes" />
            <Big w={76} icon={<PropertiesIco />} a="Properties" />
            <Big w={47} icon={<Blocks />} a="Blocks" />
            <Big w={70} icon={<SheetSet />} a="Sheet Set" b="Manager" />
            <ToolGrid>
              <Tool $on aria-label="Command line"><Terminal /></Tool>
              <Tool aria-label="Design center"><DesignCenter /></Tool>
              <Tool aria-label="Layer properties"><Layers /></Tool>
              <Tool aria-label="Calculator"><Calc /></Tool>
              <Tool aria-label="Markup set"><Markup /></Tool>
              <Tool aria-label="Clipboard"><Clipboard /></Tool>
            </ToolGrid>
            <Divider />
            <List $pad={6}>
              <Row><Materials />Materials Browser</Row>
              <Row><MaterialsEdit />Materials Editor</Row>
              <Row><Styles />Visual Styles</Row>
            </List>
            <ToolColumn>
              <Tool aria-label="Render"><Teapot /></Tool>
              <Tool aria-label="Lights"><Lights /></Tool>
              <Tool aria-label="Sun"><Sun /></Tool>
            </ToolColumn>
          </PanelBody>
          <PanelTitle>Palettes <Down w={10} h={5} /></PanelTitle>
        </Panel>
        <Panel $w={333} $last>
          <PanelBody>
            <Big w={82} menu icon={<SwitchIco />} a="Switch" b="Windows" />
            <Big w={47} on icon={<FileTabIco />} a="File" b="Tabs" />
            <Big w={52} on icon={<LayoutTabIco />} a="Layout" b="Tabs" />
            <List $pad={4}>
              <Row><TileH />Tile Horizontally</Row>
              <Row><TileV />Tile Vertically</Row>
              <Row><CascadeIco />Cascade</Row>
            </List>
          </PanelBody>
          <PanelTitle>
            <WideTitle>Interface</WideTitle>
            <Plain aria-label="Interface settings"><Launcher /></Plain>
          </PanelTitle>
        </Panel>
      </Ribbon>

      <FileTabs>
        <FileTab $w={178}><Plain>Start</Plain></FileTab>
        <FileTab $w={178} $on><Lock /><Plain>Drawing2*</Plain><Plain aria-label="Close tab"><Cross /></Plain></FileTab>
        <AddFile aria-label="New tab"><Plus /></AddFile>
      </FileTabs>

      <Workspace>
        <Canvas>
          <Drawing />
          <ViewLabel>[−][Top][Conceptual]</ViewLabel>
          <Coordinates>
            <Coordinate $bg="#cf6664">5282.0458</Coordinate>
            <Coordinate $bg="#62cb66">3393.9387</Coordinate>
          </Coordinates>
          <SheetButtons>
            <Plain aria-label="Minimize drawing"><Ico w={20} h={18}><path d="M3 9h14v5H3z" fill="#eee" stroke="#666" strokeWidth="1.500" /></Ico></Plain>
            <Plain aria-label="Restore drawing"><Ico w={20} h={18}><path d="M6 1.500h12V13M6 1.500V4" fill="none" stroke="#555" strokeWidth="1.500" /><path d="M3.500 4.500h11v11h-11z" fill="#eee" stroke="#555" strokeWidth="1.500" /><path d="M7 8h4v4H7z" fill="#ccc" stroke="#444" /></Ico></Plain>
            <Plain aria-label="Close drawing"><Ico w={20} h={18}><path d="M3 2.500h5l2 3 2-3h5v3.500l-3 3 3 3v3.500h-5l-2-3-2 3H3V12l3-3-3-3z" fill="#e6e6e6" stroke="#5a5a5a" strokeWidth="1.400" /><path d="M6 5l8 8M14 5l-8 8" stroke="#777" /></Ico></Plain>
          </SheetButtons>
          <Compass>
            <CompassDial />
            <Wcs>WCS <Ico w={12} h={7}><path d="M1 .5h10L6 6z" fill="none" stroke="#b0b0bb" /></Ico></Wcs>
          </Compass>
          <NavBar aria-label="Navigation bar"><NavTools /></NavBar>
          <Console>
            <History>
              <Message $top="#a0a0a0" $end="#8f8f8f">Autodesk DWG.  This file is a TrustedDWG last saved by an Autodesk application or Autodesk licensed application.</Message>
              <Message $top="#8a8a8a" $end="#7a7a7a">Command:</Message>
              <Message $top="#757575" $end="#656565">Command:</Message>
            </History>
            <CommandLine>
              <CommandTools>
                <Grip />
                <Slot type="button" $w={14} aria-label="Close command line"><Cross s={12} color="#e8e8e8" /></Slot>
                <Slot type="button" $w={34} aria-label="Customize command line"><Wrench /></Slot>
              </CommandTools>
              <CommandField>
                <Slot type="button" $w={32} $gap={2} aria-label="Recent commands"><Terminal w={20} h={17} /><Down w={10} h={5} fill="#555" /></Slot>
                <Caret />
                <CommandInput aria-label="Command" />
                <Plain type="button" aria-label="Show history"><Ico w={10} h={6}><path d="M0 6h10L5 0z" fill="#666" /></Ico></Plain>
              </CommandField>
            </CommandLine>
          </Console>
        </Canvas>
        <Edge />
        <FrameEdge />
      </Workspace>

      <Footer>
        <LayoutTabs>
          <LayoutTab $w={92} $on>Model</LayoutTab>
          <LayoutTab $w={90}>Layout1</LayoutTab>
          <LayoutTab $w={92}>Layout2</LayoutTab>
          <AddLayout aria-label="Add layout"><Plus /></AddLayout>
        </LayoutTabs>
        <StatusBar>
          <Group $w={59}><StatusButton>MODEL</StatusButton></Group>
          <Group $w={79}>
            <StatusButton aria-label="Grid"><StatusGrid /></StatusButton>
            <StatusButton aria-label="Snap"><Snap /></StatusButton>
            <StatusButton aria-label="Snap options"><StatusDown /></StatusButton>
          </Group>
          <Group $w={208}>
            <StatusButton aria-label="Ortho"><Ortho /></StatusButton>
            <StatusButton aria-label="Polar"><Polar /></StatusButton>
            <StatusButton aria-label="Polar options"><StatusDown /></StatusButton>
            <StatusButton aria-label="Isodraft"><Iso /></StatusButton>
            <StatusButton aria-label="Isodraft options"><StatusDown /></StatusButton>
            <StatusButton aria-label="Tracking"><Track /></StatusButton>
            <StatusButton aria-label="Object snap"><Osnap /></StatusButton>
            <StatusButton aria-label="Object snap options"><StatusDown /></StatusButton>
          </Group>
          <Group $w={131}>
            <StatusButton $on aria-label="Annotation visibility"><Person kind={1} /></StatusButton>
            <StatusButton aria-label="Auto scale"><Person kind={2} /></StatusButton>
            <StatusButton aria-label="Annotation scale"><Person /></StatusButton>
            <StatusButton>1:1 <StatusDown /></StatusButton>
          </Group>
          <Group $w={80}>
            <StatusButton aria-label="Workspace"><Gear /></StatusButton>
            <StatusButton aria-label="Workspace options"><StatusDown /></StatusButton>
            <StatusButton aria-label="Monitor"><BigPlus /></StatusButton>
          </Group>
          <Group $w={30}><StatusButton aria-label="Isolate"><Isolate /></StatusButton></Group>
          <Group $w={68}>
            <StatusButton aria-label="Hardware"><Hardware /></StatusButton>
            <StatusButton aria-label="Warnings"><Warn /></StatusButton>
          </Group>
          <Group $w={61}>
            <StatusButton aria-label="Clean screen"><Clean /></StatusButton>
            <StatusButton aria-label="Customization"><Menu /></StatusButton>
          </Group>
        </StatusBar>
      </Footer>

      <GripMark />
      <Balloon>
        <Bulb />
        <div>
          <h2>3D display performance</h2>
          <p>You can improve performance for<br />3D pan, zoom, and orbit operations.</p>
          <a href="#hide">Don't show me this again</a>
        </div>
        <BalloonTools>
          <Plain aria-label="Close notice"><Ico w={15} h={15}><circle cx="7.500" cy="7.500" r="7" fill="#737375" /><path d="M5 5l5 5m0-5l-5 5" stroke="#e8e8e8" strokeWidth="1.800" /></Ico></Plain>
          <Plain aria-label="More"><Down w={15} h={11} fill="#555558" /></Plain>
        </BalloonTools>
      </Balloon>
    </Window>
  );
}
